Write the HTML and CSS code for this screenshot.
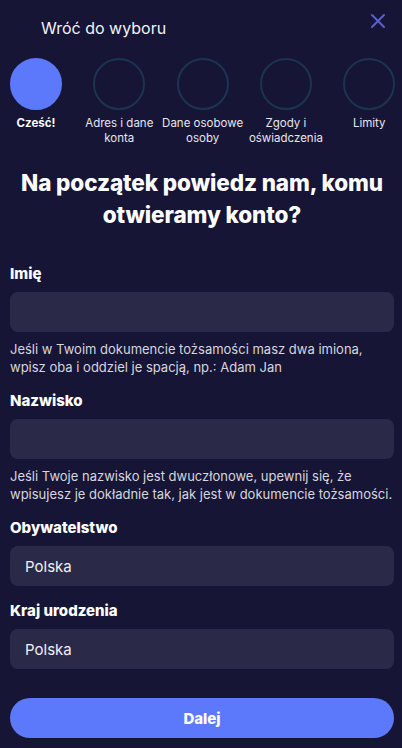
FILE: index.html
```html
<!DOCTYPE html>
<html lang="pl">
<head>
<meta charset="utf-8">
<title>Otwieranie konta</title>
<link rel="stylesheet" href="styles.css">
</head>
<body>
<div class="page">
  <header class="topbar">
    <span class="back">Wróć do wyboru</span>
    <button class="close" aria-label="Zamknij">
      <svg width="16" height="16" viewBox="0 0 16 16"><path d="M2 2 L14 14 M14 2 L2 14" stroke="#5b5fd0" stroke-width="2" stroke-linecap="round"/></svg>
    </button>
  </header>

  <ol class="steps">
    <li class="step active"><span class="dot"></span><span class="slabel">Cześć!</span></li>
    <li class="step"><span class="dot"></span><span class="slabel">Adres i dane konta</span></li>
    <li class="step"><span class="dot"></span><span class="slabel">Dane osobowe osoby</span></li>
    <li class="step"><span class="dot"></span><span class="slabel">Zgody i oświadczenia</span></li>
    <li class="step"><span class="dot"></span><span class="slabel">Limity</span></li>
  </ol>

  <h1 class="title">Na początek powiedz nam, komu otwieramy konto?</h1>

  <form class="form">
    <div class="field">
      <label class="flabel">Imię</label>
      <div class="input"></div>
      <p class="hint">Jeśli w Twoim dokumencie tożsamości masz dwa imiona, wpisz oba i oddziel je spacją, np.: Adam Jan</p>
    </div>
    <div class="field">
      <label class="flabel">Nazwisko</label>
      <div class="input"></div>
      <p class="hint">Jeśli Twoje nazwisko jest dwuczłonowe, upewnij się, że wpisujesz je dokładnie tak, jak jest w dokumencie tożsamości.</p>
    </div>
    <div class="field">
      <label class="flabel">Obywatelstwo</label>
      <div class="input">Polska</div>
    </div>
    <div class="field">
      <label class="flabel">Kraj urodzenia</label>
      <div class="input">Polska</div>
    </div>
    <button type="button" class="next">Dalej</button>
  </form>
</div>
</body>
</html>
```
FILE: styles.css
```css
* { box-sizing: border-box; }
html, body { margin: 0; padding: 0; }
body {
  background: #161536;
  color: #fff;
  font-family: Inter, "Noto Sans", "Liberation Sans", sans-serif;
  width: 402px;
  height: 748px;
  overflow: hidden;
}
.page { padding: 0 8px 0 10px; }
.topbar {
  display: flex;
  justify-content: space-between;
  align-items: flex-start;
  height: 58px;
}
.back {
  margin: 18px 0 0 31px;
  font-size: 16px;
  line-height: 20px;
  color: #f2f2f6;
}
.close {
  background: none;
  border: 0;
  padding: 0;
  margin: 13px 8px 0 0;
  width: 16px;
  height: 16px;
  display: flex;
}
.steps {
  list-style: none;
  margin: 0;
  padding: 0;
  display: flex;
  gap: 31.3px;
}
.step {
  width: 52px;
  flex: none;
  display: flex;
  flex-direction: column;
  align-items: center;
}
.dot {
  width: 52px;
  height: 52px;
  border-radius: 50%;
  border: 2px solid #1b3450;
}
.step.active .dot { background: #5b79fa; border-color: #5b79fa; }
.slabel {
  width: 84px;
  margin-top: 6px;
  text-align: center;
  font-size: 11.5px;
  line-height: 15px;
  color: #e6e6ee;
}
.step.active .slabel { font-weight: 700; color: #fff; }
.title {
  margin: 21px 0 0;
  text-align: center;
  font-size: 22.5px;
  line-height: 32px;
  font-weight: 800;
  letter-spacing: -0.1px;
}
.form {
  margin-top: 33px;
  display: flex;
  flex-direction: column;
  gap: 15px;
}
.field { display: flex; flex-direction: column; }
.flabel {
  font-size: 15px;
  line-height: 20px;
  font-weight: 800;
}
.input {
  margin-top: 8px;
  height: 40px;
  border-radius: 8px;
  background: #2a2a48;
  padding: 0 15px;
  display: flex;
  align-items: center;
  font-size: 15px;
  color: #f0f0f4;
}
.hint {
  margin: 8px 0 0;
  font-size: 13px;
  line-height: 18px;
  color: #d6d6df;
}
.next {
  margin-top: 14px;
  height: 40px;
  border: 0;
  border-radius: 20px;
  background: #5b79fa;
  color: #fff;
  font-family: inherit;
  font-size: 15px;
  font-weight: 800;
}
```
